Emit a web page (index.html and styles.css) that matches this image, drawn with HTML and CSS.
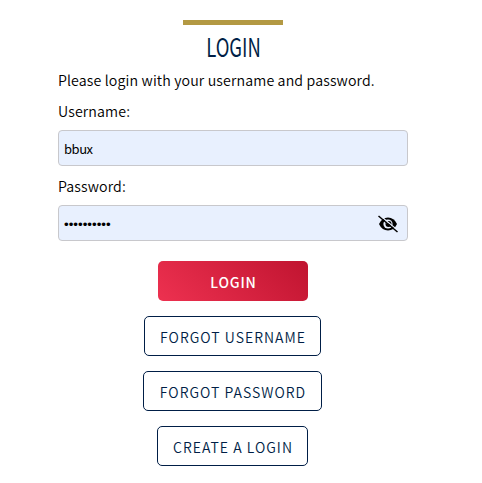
FILE: index.html
```html
<!DOCTYPE html>
<html lang="en">
<head>
<meta charset="utf-8">
<title>Login</title>
<link rel="stylesheet" href="styles.css">
</head>
<body>
<main class="login">
  <h1 class="title"><span class="title-text">LOGIN</span></h1>
  <form class="form">
    <p class="intro">Please login with your username and password.</p>
    <label class="label" for="username">Username:</label>
    <input class="input" id="username" type="text" value="bbux">
    <label class="label" for="password">Password:</label>
    <div class="field">
      <input class="input input-password" id="password" type="password" value="xxxxxxxxxx">
      <svg class="eye" viewBox="0 0 20 18" aria-hidden="true">
        <path d="M1 9Q4 2.5 10 2.5T19 9Q16 15.5 10 15.5T1 9Z" fill="#000"/>
        <circle cx="10" cy="9" r="4.6" fill="#e8f0fe"/>
        <circle cx="10.5" cy="9" r="3" fill="#000"/>
        <circle cx="9.5" cy="8" r="1.1" fill="#e8f0fe"/>
        <path d="M1.5 0L20 15.5" stroke="#e8f0fe" stroke-width="1.2"/>
        <path d="M.5 1L19.5 17" stroke="#000" stroke-width="1.5"/>
      </svg>
    </div>
  </form>
  <div class="actions">
    <button class="button primary" type="submit">LOGIN</button>
    <button class="button username" type="button">FORGOT USERNAME</button>
    <button class="button password" type="button">FORGOT PASSWORD</button>
    <button class="button create" type="button">CREATE A LOGIN</button>
  </div>
</main>
</body>
</html>
```
FILE: styles.css
```css
* { box-sizing: border-box; }
body {
  margin: 0;
  background: #fff;
  color: #000;
  font-family: "Noto Sans CJK SC", "Noto Sans", sans-serif;
}
.login { width: 350px; margin: 20px 0 0 58px; }
.title {
  display: flex;
  flex-direction: column;
  align-items: center;
  margin: 0;
  color: #001e46;
  font-size: 26px;
  font-weight: 400;
  line-height: 35px;
}
.title::before { content: ""; width: 100px; height: 5px; margin-bottom: 3px; background: #b39943; }
.title-text { transform: scaleX(.71); }
.intro, .label { display: block; margin: 0; font-size: 14.2px; font-weight: 350; line-height: 20px; letter-spacing: .13px; white-space: nowrap; }
.intro { margin: 7px 0 11px; }
.input {
  display: block;
  width: 350px;
  height: 36px;
  margin: 9px 0 10px;
  padding: 0 5px;
  border: 1px solid #c8c8cc;
  border-radius: 4px;
  background: #e8f0fe;
  color: #000;
  font: 13px "Noto Sans CJK SC", sans-serif;
  letter-spacing: -.45px;
  outline: 0;
}
.field { position: relative; }
.input-password { margin-bottom: 20px; padding-top: 2px; font: 13.333px "Liberation Sans", sans-serif; letter-spacing: 0; }
.eye { position: absolute; left: 320px; top: 10px; width: 20px; height: 18px; }
.actions { display: flex; flex-direction: column; align-items: center; gap: 15px; }
.button {
  height: 40px;
  margin-right: 1px;
  padding: 1px 0 0;
  border: 1px solid #001e46;
  border-radius: 5px;
  background: #fff;
  color: #001e46;
  font: 350 14px "Noto Sans CJK SC", sans-serif;
  letter-spacing: 1.02px;
  text-indent: 1px;
  white-space: nowrap;
}
.primary { width: 150px; margin-right: 0; border: 0; background: linear-gradient(45deg, #ed3150, #c01430); color: #fff; font-weight: 500; letter-spacing: .8px; }
.username { width: 177px; }
.password { width: 179px; }
.create { width: 151px; }
```
